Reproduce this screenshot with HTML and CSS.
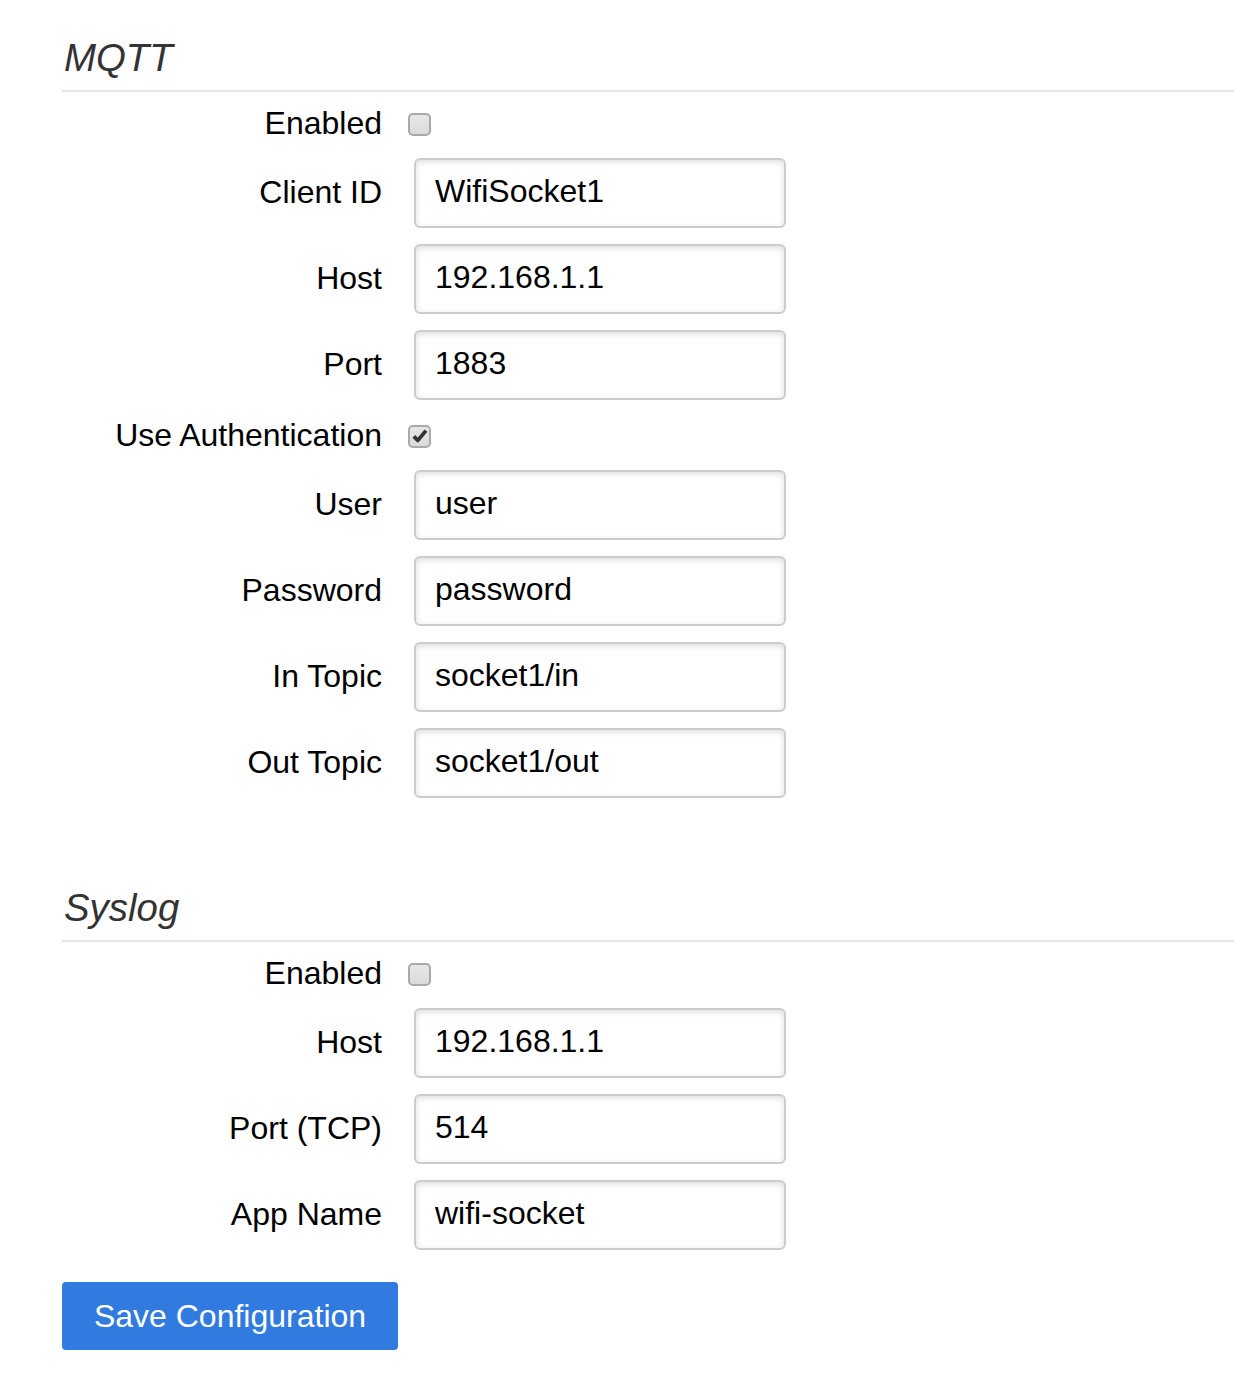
FILE: index.html
```html
<!DOCTYPE html>
<html lang="en">
<head>
<meta charset="utf-8">
<title>Configuration</title>
<link rel="stylesheet" href="styles.css">
</head>
<body>
<form class="form">
  <section class="group">
    <div class="legend">MQTT</div>
    <div class="row row-check">
      <label class="label">Enabled</label>
      <span class="check"></span>
    </div>
    <div class="row">
      <label class="label">Client ID</label>
      <input class="field" type="text" value="WifiSocket1">
    </div>
    <div class="row">
      <label class="label">Host</label>
      <input class="field" type="text" value="192.168.1.1">
    </div>
    <div class="row">
      <label class="label">Port</label>
      <input class="field" type="text" value="1883">
    </div>
    <div class="row row-check">
      <label class="label">Use Authentication</label>
      <span class="check"><svg class="tick" viewBox="0 0 18 18" width="18" height="18"><path d="M2.8 9.4 L6.8 13.4 L15 3.6" fill="none" stroke="#333" stroke-width="3.8" stroke-linejoin="round"/></svg></span>
    </div>
    <div class="row">
      <label class="label">User</label>
      <input class="field" type="text" value="user">
    </div>
    <div class="row">
      <label class="label">Password</label>
      <input class="field" type="text" value="password">
    </div>
    <div class="row">
      <label class="label">In Topic</label>
      <input class="field" type="text" value="socket1/in">
    </div>
    <div class="row">
      <label class="label">Out Topic</label>
      <input class="field" type="text" value="socket1/out">
    </div>
  </section>
  <section class="group">
    <div class="legend">Syslog</div>
    <div class="row row-check">
      <label class="label">Enabled</label>
      <span class="check"></span>
    </div>
    <div class="row">
      <label class="label">Host</label>
      <input class="field" type="text" value="192.168.1.1">
    </div>
    <div class="row">
      <label class="label">Port (TCP)</label>
      <input class="field" type="text" value="514">
    </div>
    <div class="row">
      <label class="label">App Name</label>
      <input class="field" type="text" value="wifi-socket">
    </div>
  </section>
  <button class="btn" type="button">Save Configuration</button>
</form>
</body>
</html>
```
FILE: styles.css
```css
html, body {
  margin: 0;
  padding: 0;
  background: #fff;
}

body {
  font-family: "Liberation Sans", Arial, Helvetica, sans-serif;
  font-size: 32px;
  color: #000;
}

.form {
  padding: 36px 0 0 62px;
}

.group {
  margin: 0 0 88px 0;
}

.group + .group {
  margin-bottom: 0;
}

.legend {
  font-size: 38.4px;
  font-style: italic;
  line-height: 44px;
  color: #333;
  padding: 0 0 10px 2px;
  border-bottom: 2px solid #e5e5e5;
  margin-bottom: 12px;
}

.row {
  display: flex;
  align-items: center;
  margin-bottom: 16px;
}

.row-check {
  height: 38px;
}

.label {
  width: 320px;
  text-align: right;
  margin-right: 32px;
  line-height: 38px;
  padding-bottom: 3px;
  flex-shrink: 0;
}

.row-check .label {
  margin-right: 26px;
  padding-bottom: 0;
}

.field {
  box-sizing: border-box;
  width: 372px;
  height: 70px;
  margin: 0;
  padding: 0 0 3px 19px;
  border: 2px solid #ccc;
  border-radius: 6px;
  box-shadow: inset 0 2px 6px #ddd;
  font-family: "Liberation Sans", Arial, Helvetica, sans-serif;
  font-size: 32px;
  color: #000;
  background: #fff;
  outline: none;
}

.check {
  box-sizing: border-box;
  width: 23px;
  height: 23px;
  margin-top: 2px;
  border: 2px solid #a9a9a9;
  border-radius: 5px;
  background: linear-gradient(#e6e6e6, #dcdcdc);
  display: flex;
  align-items: center;
  justify-content: center;
}

.tick {
  display: block;
  width: 18px;
  height: 18px;
}

.btn {
  display: block;
  margin-top: 32px;
  width: 336px;
  height: 68px;
  padding: 0;
  border: 0;
  border-radius: 4px;
  background: #307ae0;
  color: #fff;
  font-family: "Liberation Sans", Arial, Helvetica, sans-serif;
  font-size: 32px;
  cursor: pointer;
}
```
